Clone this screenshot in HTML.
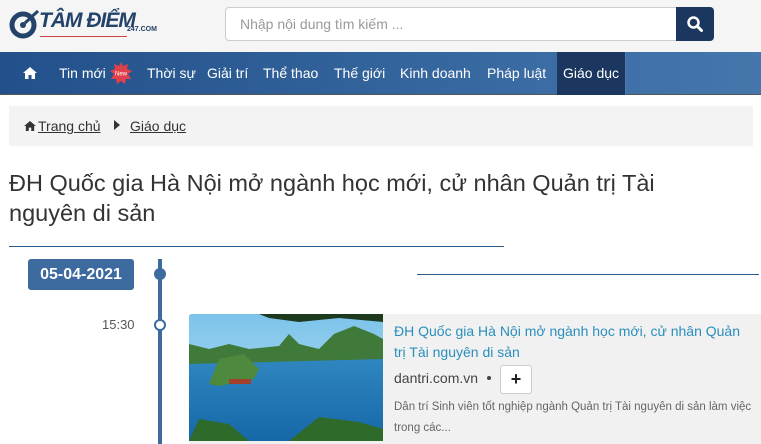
<!DOCTYPE html>
<html><head><meta charset="utf-8"><style>
*{margin:0;padding:0;box-sizing:border-box}
body{width:761px;height:444px;overflow:hidden;background:#fff;font-family:"Liberation Sans","DejaVu Sans",sans-serif;color:#333;position:relative}
.a{position:absolute}
.hdr{left:0;top:0;width:761px;height:52px;background:#f5f5f5}
.nav{left:0;top:52px;width:761px;height:43px;background:linear-gradient(90deg,#22508a,#4577ad);border-bottom:1px solid #555}
.nav span{position:absolute;top:13px;color:#fff;font-size:14px;white-space:nowrap}
</style></head><body>
<div class="a hdr"></div>
<svg class="a" style="left:8px;top:8px" width="36" height="32" viewBox="0 0 36 32"><circle cx="15" cy="17" r="11" fill="none" stroke="#23436a" stroke-width="5"/><circle cx="15" cy="17" r="3" fill="#23436a"/><path d="M17 15 L30 3" stroke="#23436a" stroke-width="3"/></svg>
<div class="a" style="left:39px;top:9px;font-size:21px;font-weight:bold;color:#23436a;letter-spacing:-1px;font-style:italic">TÂM ĐIỂM</div>
<div class="a" style="left:127px;top:26px;font-size:7px;font-weight:bold;color:#23436a">247.COM</div>
<div class="a" style="left:40px;top:36px;width:87px;height:1px;background:#c44"></div>
<div class="a" style="left:225px;top:7px;width:452px;height:34px;background:#fff;border:1px solid #ccc;border-radius:4px 0 0 4px"></div>
<div class="a" style="left:240px;top:16px;font-size:14px;color:#999">Nhập nội dung tìm kiếm ...</div>
<div class="a" style="left:676px;top:7px;width:38px;height:34px;background:#1b365f;border-radius:0 4px 4px 0"></div>
<svg class="a" style="left:686px;top:15px" width="18" height="18" viewBox="0 0 18 18"><circle cx="7.5" cy="7.5" r="5" fill="none" stroke="#fff" stroke-width="2.5"/><path d="M11 11 L15.5 15.5" stroke="#fff" stroke-width="3" stroke-linecap="round"/></svg>
<div class="a nav">
<svg style="position:absolute;left:23px;top:15px" width="14" height="12" viewBox="0 0 14 12"><path d="M7 0 L14 6 L12 6 L12 12 L8.5 12 L8.5 8 L5.5 8 L5.5 12 L2 12 L2 6 L0 6Z" fill="#fff"/></svg>
<span style="left:59px">Tin mới</span>
<svg style="position:absolute;left:110px;top:10px" width="22" height="22" viewBox="0 0 22 22"><polygon points="11,0 13,4 18,2 17,7 22,9 18,12 21,17 16,17 15,22 11,19 7,22 6,17 1,17 4,12 0,9 5,7 4,2 9,4" fill="#e0404a"/><text x="11" y="13.5" font-size="6" fill="#fff" text-anchor="middle" font-family="Liberation Sans">New</text></svg>
<span style="left:147px">Thời sự</span>
<span style="left:207px">Giải trí</span>
<span style="left:263px">Thể thao</span>
<span style="left:334px">Thế giới</span>
<span style="left:400px">Kinh doanh</span>
<span style="left:487px">Pháp luật</span>
<div style="position:absolute;left:557px;top:0;width:69px;height:43px;background:#1b365f;border-right:1px solid #4d7ab0"></div>
<span style="left:563px">Giáo dục</span>
</div>
<div class="a" style="left:9px;top:106px;width:744px;height:40px;background:#f3f3f3"></div>
<svg class="a" style="left:24px;top:121px" width="12" height="10" viewBox="0 0 14 12"><path d="M7 0 L14 6 L12 6 L12 12 L8.5 12 L8.5 8 L5.5 8 L5.5 12 L2 12 L2 6 L0 6Z" fill="#333"/></svg>
<div class="a" style="left:38px;top:118px;font-size:14px;text-decoration:underline">Trang chủ</div>
<div class="a" style="left:114px;top:120px;width:0;height:0;border-left:6px solid #333;border-top:5px solid transparent;border-bottom:5px solid transparent"></div>
<div class="a" style="left:130px;top:118px;font-size:14px;text-decoration:underline">Giáo dục</div>
<div class="a" style="left:9px;top:168px;width:700px;font-size:23.5px;line-height:30px;color:#333">ĐH Quốc gia Hà Nội mở ngành học mới, cử nhân Quản trị Tài nguyên di sản</div>
<div class="a" style="left:9px;top:246px;width:495px;height:1px;background:#2a5a8a"></div>
<div class="a" style="left:417px;top:274px;width:342px;height:1px;background:#2a5a8a"></div>
<div class="a" style="left:28px;top:259px;width:106px;height:31px;background:#3d6a9f;border-radius:3px;color:#fff;font-weight:bold;font-size:16px;text-align:center;line-height:31px">05-04-2021</div>
<div class="a" style="left:158px;top:259px;width:4px;height:185px;background:#3d6a9f"></div>
<div class="a" style="left:154px;top:268px;width:12px;height:12px;border-radius:50%;background:#3d6a9f"></div>
<div class="a" style="left:154px;top:319px;width:12px;height:12px;border-radius:50%;background:#fff;border:2.5px solid #3d6a9f"></div>
<div class="a" style="left:102px;top:317px;font-size:13px;color:#555">15:30</div>
<div class="a" style="left:189px;top:314px;width:572px;height:130px;background:#f1f1f1"></div>
<svg class="a" style="left:189px;top:314px" width="194" height="127" viewBox="0 0 194 127"><defs><linearGradient id="s" x1="0" y1="0" x2="0" y2="1"><stop offset="0" stop-color="#7cc3ea"/><stop offset="1" stop-color="#bde3f5"/></linearGradient><linearGradient id="w" x1="0" y1="0" x2="0" y2="1"><stop offset="0" stop-color="#2f86c0"/><stop offset="1" stop-color="#1668a8"/></linearGradient></defs><rect width="194" height="127" fill="url(#s)" rx="3"/><rect y="45" width="194" height="82" fill="url(#w)"/><path d="M0 30 L20 35 L40 30 L60 35 L90 32 L100 20 L110 30 L130 35 L145 20 L165 12 L185 20 L194 25 L194 45 L0 50Z" fill="#3f7a3a"/><path d="M20 70 L30 45 L55 40 L70 55 L65 65 L30 72Z" fill="#4d8a3e"/><path d="M0 127 L10 105 L40 110 L60 127Z M100 127 L130 103 L170 108 L194 115 L194 127Z" fill="#2e6a2a"/><rect x="40" y="65" width="22" height="5" fill="#a3402c"/><path d="M70 0 L194 0 L194 8 L150 4 L110 8 L80 4Z" fill="#1e3a1e"/></svg>
<div class="a" style="left:394px;top:321px;width:350px;font-size:14px;line-height:21px;color:#2a8fbd">ĐH Quốc gia Hà Nội mở ngành học mới, cử nhân Quản trị Tài nguyên di sản</div>
<div class="a" style="left:394px;top:370px;font-size:14px;color:#444">dantri.com.vn</div>
<div class="a" style="left:487px;top:376px;width:4px;height:4px;border-radius:50%;background:#444"></div>
<div class="a" style="left:500px;top:365px;width:32px;height:29px;background:#fff;border:1px solid #ccc;border-radius:3px;text-align:center;line-height:27px;font-weight:bold;font-size:18px;color:#222">+</div>
<div class="a" style="left:394px;top:397px;width:362px;font-size:11.5px;line-height:21px;color:#666">Dân trí Sinh viên tốt nghiệp ngành Quản trị Tài nguyên di sản làm việc trong các...</div>
</body></html>
